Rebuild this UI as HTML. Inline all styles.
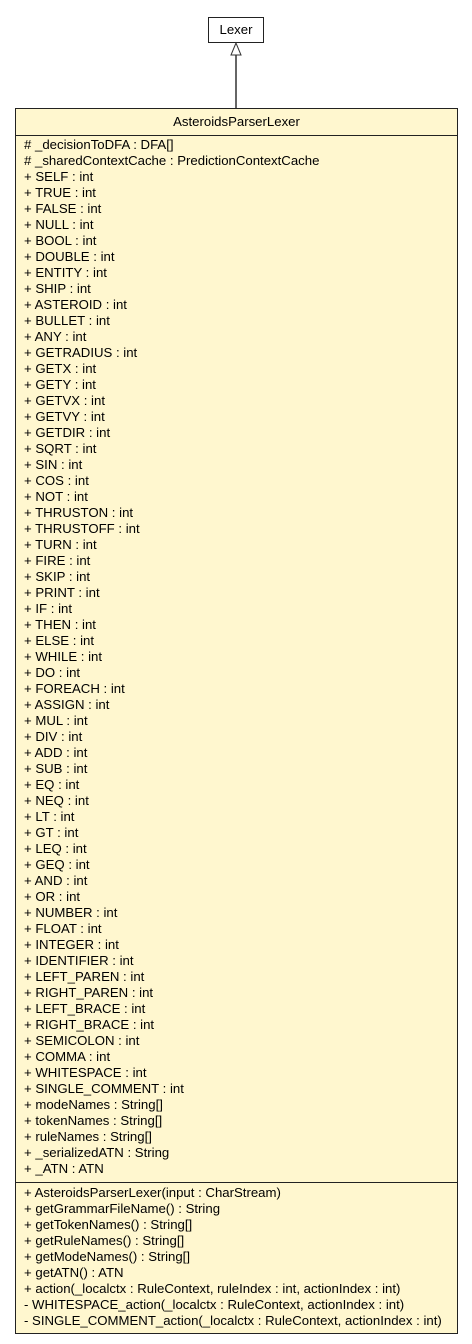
<!DOCTYPE html>
<html><head><meta charset="utf-8"><style>
html,body{margin:0;padding:0;background:#fff;width:472px;height:1344px;overflow:hidden;position:relative;font-family:"Liberation Sans",Helvetica,Arial,sans-serif;font-size:13.2px;color:#000}
.box{position:absolute;left:15px;top:108px;width:441px;height:1224px;background:#fff7cf;border:1px solid #222}
.title{position:absolute;left:0;top:0;width:100%;height:26px;line-height:26px;text-align:center;border-bottom:1px solid #222}
.attrs,.meths{position:absolute;left:8px;line-height:16px;white-space:pre}
.attrs{top:28px}
.meths{top:1076px}
.div2{position:absolute;left:0;top:1073px;width:100%;border-top:1px solid #222}
.lexer{position:absolute;left:208px;top:17px;width:54px;height:24px;border:1px solid #222;text-align:center;line-height:24px;background:#fff}
</style></head><body>
<div class="lexer">Lexer</div>
<svg style="position:absolute;left:0;top:0" width="472" height="120">
<line x1="236" y1="55" x2="236" y2="108" stroke="#333" stroke-width="1.5"/>
<polygon points="236,43 231,55 241,55" fill="#fff" stroke="#333" stroke-width="1"/>
</svg>
<div class="box">
<div class="title">AsteroidsParserLexer</div>
<div class="attrs"># _decisionToDFA : DFA[]
# _sharedContextCache : PredictionContextCache
+ SELF : int
+ TRUE : int
+ FALSE : int
+ NULL : int
+ BOOL : int
+ DOUBLE : int
+ ENTITY : int
+ SHIP : int
+ ASTEROID : int
+ BULLET : int
+ ANY : int
+ GETRADIUS : int
+ GETX : int
+ GETY : int
+ GETVX : int
+ GETVY : int
+ GETDIR : int
+ SQRT : int
+ SIN : int
+ COS : int
+ NOT : int
+ THRUSTON : int
+ THRUSTOFF : int
+ TURN : int
+ FIRE : int
+ SKIP : int
+ PRINT : int
+ IF : int
+ THEN : int
+ ELSE : int
+ WHILE : int
+ DO : int
+ FOREACH : int
+ ASSIGN : int
+ MUL : int
+ DIV : int
+ ADD : int
+ SUB : int
+ EQ : int
+ NEQ : int
+ LT : int
+ GT : int
+ LEQ : int
+ GEQ : int
+ AND : int
+ OR : int
+ NUMBER : int
+ FLOAT : int
+ INTEGER : int
+ IDENTIFIER : int
+ LEFT_PAREN : int
+ RIGHT_PAREN : int
+ LEFT_BRACE : int
+ RIGHT_BRACE : int
+ SEMICOLON : int
+ COMMA : int
+ WHITESPACE : int
+ SINGLE_COMMENT : int
+ modeNames : String[]
+ tokenNames : String[]
+ ruleNames : String[]
+ _serializedATN : String
+ _ATN : ATN</div>
<div class="div2"></div>
<div class="meths">+ AsteroidsParserLexer(input : CharStream)
+ getGrammarFileName() : String
+ getTokenNames() : String[]
+ getRuleNames() : String[]
+ getModeNames() : String[]
+ getATN() : ATN
+ action(_localctx : RuleContext, ruleIndex : int, actionIndex : int)
- WHITESPACE_action(_localctx : RuleContext, actionIndex : int)
- SINGLE_COMMENT_action(_localctx : RuleContext, actionIndex : int)</div>
</div>
</body></html>
